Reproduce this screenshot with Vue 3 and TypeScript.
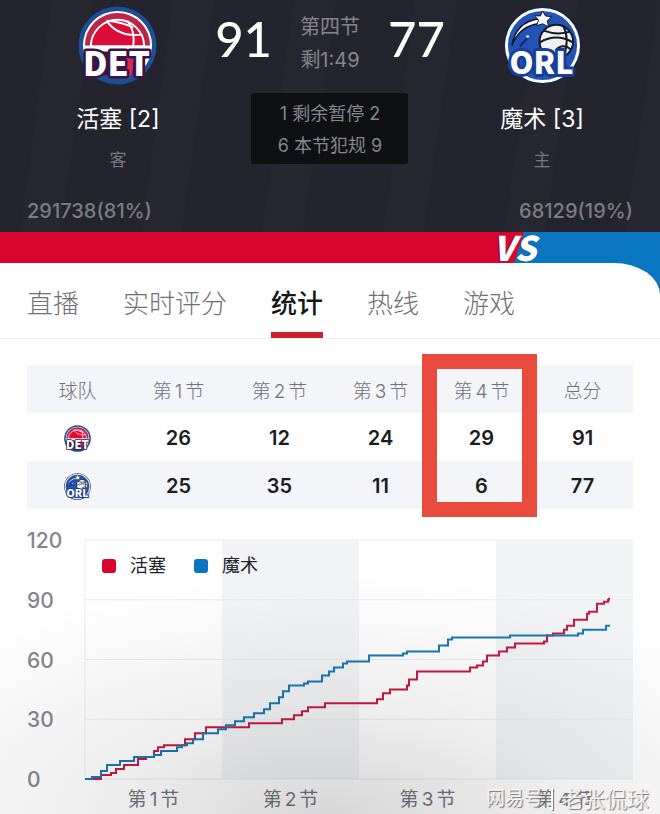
<script setup lang="ts">
interface Team {
  key: string
  code: string
  name: string
  rank: number
  side: string
  votes: string
  quarters: number[]
  total: number
}

type Point = [x: number, score: number]

const teams: Team[] = [
  { key: 'det', code: 'DET', name: '活塞', rank: 2, side: '客', votes: '291738(81%)', quarters: [26, 12, 24, 29], total: 91 },
  { key: 'orl', code: 'ORL', name: '魔术', rank: 3, side: '主', votes: '68129(19%)', quarters: [25, 35, 11, 6], total: 77 },
]
const [away, home] = teams

const tabs = ['直播', '实时评分', '统计', '热线', '游戏']
const activeTab = '统计'
const quarters = [1, 2, 3, 4]
const ticks = [120, 90, 60, 30, 0]

const awayRun: Point[] = [
  [0, 0], [16, 2], [26, 3], [31, 5], [39, 7], [53, 10], [61, 11], [69, 14], [73, 16], [79, 17],
  [100, 20], [110, 23], [121, 26], [164, 28], [197, 30], [209, 32], [217, 34], [223, 36], [240, 38],
  [292, 40], [298, 43], [305, 45], [322, 47], [324, 50], [332, 54], [385, 56], [392, 57], [398, 59],
  [402, 62], [414, 64], [422, 66], [430, 68], [459, 69], [462, 72], [468, 73], [479, 75], [482, 77],
  [489, 80], [502, 83], [504, 84], [512, 88], [519, 89], [523, 90], [524, 91],
]
const homeRun: Point[] = [
  [0, 0], [7, 1], [16, 4], [22, 7], [35, 9], [49, 11], [69, 12], [76, 14], [92, 16], [97, 17],
  [102, 18], [108, 20], [118, 23], [133, 25], [141, 27], [150, 29], [159, 31], [169, 33], [179, 35],
  [185, 38], [194, 41], [198, 44], [204, 47], [219, 48], [223, 49], [237, 52], [244, 54], [249, 56],
  [258, 58], [262, 59], [284, 62], [318, 63], [322, 64], [354, 67], [363, 70], [367, 71], [425, 72],
  [493, 73], [498, 75], [521, 77], [525, 77],
]

// Two vertical units per point scored, drawn as a staircase.
function stepPath(run: Point[]): string {
  return run
    .map(([x, score], i) => (i === 0 ? `M${x} ${240 - score * 2}` : `H${x}V${240 - score * 2}`))
    .join('')
}
const awayPath = stepPath(awayRun)
const homePath = stepPath(homeRun)
</script>

<template>
  <main class="page">
    <svg class="defs" aria-hidden="true">
      <symbol id="logo-det" viewBox="0 0 80 80">
        <circle cx="40" cy="40" r="39.5" fill="#1c4f94" />
        <circle cx="40" cy="40" r="35" fill="#fff" />
        <circle cx="40" cy="40" r="33" fill="#b9284a" />
        <path d="M13 41A27 27 0 0 1 67 41Z" fill="#dc0c38" stroke="#fff" stroke-width="2" />
        <path d="M29 15C36 25 46 31 64 29M50 15Q58 24 56 42M29 15Q44 16 56 22" fill="none" stroke="#fff" stroke-width="2" />
        <path d="M6 40H74L70 57Q61 74 40 74T10 57Z" fill="#fff" />
        <path d="M22 72Q40 82 60 70L56 69H26Z" fill="#1c4f94" />
        <path d="M10 46H68V70H10Z" fill="#3a1444" />
        <path d="M49 48L57 44L55 70L48 72Z" fill="#d42b54" />
      </symbol>
      <symbol id="logo-orl" viewBox="0 0 80 80">
        <circle cx="40" cy="40" r="39.5" fill="#15264d" />
        <circle cx="40" cy="40" r="38" fill="#fff" />
        <circle cx="40" cy="40" r="35" fill="#2253b5" />
        <circle cx="54" cy="36" r="17" fill="#f0f0f0" stroke="#111827" stroke-width="2" />
        <path d="M41 25Q55 30 68 26M37 37Q54 27 71 37M61 20Q68 34 61 52M53 45Q60 37 69 44" fill="none" stroke="#111827" stroke-width="2" />
        <path d="M9 40Q13 16 37 13L36 18Q17 20 9 40Z" fill="#fff" stroke="#111827" stroke-width="1.5" />
        <path d="M40 5L43 10L49 11L45 15L46 21L40 18L34 20L36 14L32 10L38 10Z" fill="#fff" stroke="#111827" />
        <path d="M17 41L25 32" stroke="#14296a" stroke-width="2" />
        <circle cx="25" cy="31" r="1.5" fill="#d8e7ff" />
      </symbol>
    </svg>

    <header class="scoreboard">
      <div class="match">
        <section class="team">
          <svg class="logo det" viewBox="0 0 80 80">
            <use href="#logo-det" />
            <text x="39" y="71">{{ away.code }}</text>
          </svg>
          <h2 class="team-name">{{ away.name }} [{{ away.rank }}]</h2>
          <p class="side">{{ away.side }}</p>
        </section>
        <section class="centre">
          <div class="score-row">
            <strong class="score">{{ away.total }}</strong>
            <div class="clock">
              <span>第四节</span>
              <span>剩1:49</span>
            </div>
            <strong class="score">{{ home.total }}</strong>
          </div>
          <div class="fouls">
            <span>1 剩余暂停 2</span>
            <span>6 本节犯规 9</span>
          </div>
        </section>
        <section class="team">
          <svg class="logo orl" viewBox="0 0 80 80">
            <use href="#logo-orl" />
            <text x="39" y="69">{{ home.code }}</text>
          </svg>
          <h2 class="team-name">{{ home.name }} [{{ home.rank }}]</h2>
          <p class="side">{{ home.side }}</p>
        </section>
      </div>
      <div class="votes">
        <span>{{ away.votes }}</span>
        <span>{{ home.votes }}</span>
      </div>
    </header>

    <div class="support">
      <div class="support-away"></div>
      <div class="support-vs">VS</div>
      <div class="support-home"></div>
    </div>

    <div class="panel-back">
      <div class="panel">
        <nav class="tabs">
          <button v-for="tab in tabs" :key="tab" type="button" class="tab" :class="{ active: tab === activeTab }">{{ tab }}</button>
        </nav>

        <div class="content">
          <div class="table-wrap">
            <table class="quarters">
              <thead>
                <tr>
                  <th scope="col">球队</th>
                  <th v-for="q in quarters" :key="q" scope="col">第<span class="num">{{ q }}</span>节</th>
                  <th scope="col">总分</th>
                </tr>
              </thead>
              <tbody>
                <tr v-for="team in teams" :key="team.key">
                  <td>
                    <svg class="mini-logo" :class="team.key" viewBox="0 0 80 80">
                      <use :href="`#logo-${team.key}`" />
                      <text x="40" y="71">{{ team.code }}</text>
                    </svg>
                  </td>
                  <td v-for="(points, i) in team.quarters" :key="i">{{ points }}</td>
                  <td>{{ team.total }}</td>
                </tr>
              </tbody>
            </table>
            <div class="highlight"></div>
          </div>

          <section class="chart">
            <div class="y-axis">
              <span v-for="tick in ticks" :key="tick">{{ tick }}</span>
            </div>
            <div class="plot">
              <svg class="lines" viewBox="0 0 548 240" preserveAspectRatio="none" aria-hidden="true">
                <rect x="137" width="137" height="240" fill="#f3f4f6" />
                <rect x="411" width="137" height="240" fill="#f3f4f6" />
                <path class="grid-line" d="M0 0H548M0 60H548M0 120H548M0 180H548M0 240H548M0 0V240" />
                <path class="run away" :d="awayPath" />
                <path class="run home" :d="homePath" />
              </svg>
              <div class="legend">
                <span class="key"><i class="swatch away"></i>{{ away.name }}</span>
                <span class="key"><i class="swatch home"></i>{{ home.name }}</span>
              </div>
            </div>
            <div class="x-axis">
              <span v-for="q in quarters" :key="q">第<span class="num">{{ q }}</span>节</span>
            </div>
          </section>
        </div>
      </div>
    </div>

    <div class="watermark"><span class="brand">网易号</span><i class="bar"></i><span>老张侃球</span></div>
  </main>
</template>

<style>
body {
  background: #fff;
}
</style>

<style scoped>
.page {
  position: relative;
  display: flex;
  flex-direction: column;
  min-height: 100vh;
  overflow: hidden;
  font-family: Inter, "Noto Sans CJK SC", sans-serif;
}
.defs {
  position: absolute;
  width: 0;
  height: 0;
}
.scoreboard {
  box-sizing: border-box;
  padding: 6px 27px 9px;
  color: #85858f;
  background:
    repeating-linear-gradient(98deg, transparent 0 50px, rgba(62, 62, 82, 0.1) 54px 90px, transparent 94px 120px),
    #24242e;
}
.match {
  display: grid;
  grid-template-columns: 3fr 4fr 3fr;
}
.team {
  display: flex;
  flex-direction: column;
  align-items: center;
}
.logo {
  width: 79px;
  height: 79px;
  overflow: visible;
}
.logo text,
.mini-logo text {
  fill: #fff;
  font-family: "Noto Sans CJK SC", sans-serif;
  font-weight: 900;
  text-anchor: middle;
  paint-order: stroke;
  stroke-linejoin: round;
}
.det text {
  font-size: 34px;
  stroke: #3a1444;
  stroke-width: 5px;
}
.orl text {
  font-size: 31px;
  stroke: #173e96;
  stroke-width: 6px;
}
.team-name {
  margin: 18px 0 0;
  font-size: 23px;
  line-height: 32px;
  font-weight: 400;
  color: #fff;
}
.side {
  margin: 13px 0 0;
  font-size: 17px;
  line-height: 24px;
  color: #777781;
}
.centre {
  display: flex;
  flex-direction: column;
  align-items: center;
}
.score-row {
  display: flex;
  justify-content: center;
  gap: 28px;
}
.score {
  font-family: Lato, sans-serif;
  font-size: 49px;
  line-height: 64px;
  font-weight: 500;
  color: #fff;
}
.clock {
  display: flex;
  flex-direction: column;
  align-items: center;
  padding-top: 5px;
  font-size: 20px;
  line-height: 33px;
  white-space: nowrap;
}
.fouls {
  display: flex;
  flex-direction: column;
  align-items: center;
  box-sizing: border-box;
  width: 157px;
  margin-top: 16px;
  padding: 5px 0 2px;
  border-radius: 3px;
  font-size: 18px;
  line-height: 32px;
  white-space: nowrap;
  background: #0e1013;
}
.votes {
  display: flex;
  justify-content: space-between;
  margin-top: 27px;
  font-size: 20px;
  line-height: 24px;
  font-weight: 500;
  color: #7c7c86;
}
.support {
  display: flex;
  height: 31px;
}
.support-away {
  flex: 496;
  background: #d9052f;
}
.support-vs {
  position: relative;
  z-index: 1;
  width: 36px;
  background: linear-gradient(108deg, #d9052f 60%, #0876c0 62%);
  color: #fff;
  font-family: "Noto Sans CJK SC", sans-serif;
  font-size: 34px;
  line-height: 30px;
  font-weight: 900;
  font-style: italic;
  text-indent: -3px;
  text-shadow: -1px 0 1px rgba(30, 20, 60, 0.5);
}
.support-home {
  flex: 128;
  background: #0876c0;
}
.panel-back {
  display: flex;
  flex: 1;
  background: #0876c0;
}
.panel {
  flex: 1;
  min-width: 0;
  border-radius: 0 46px 0 0 / 0 32px 0 0;
  background: #fff;
}
.tabs {
  display: flex;
  gap: 44px;
  height: 75px;
  padding: 0 27px;
  border-bottom: 1px solid #eeeff1;
}
.tab {
  box-sizing: border-box;
  height: 75px;
  padding: 7px 0 0;
  border: 0;
  border-bottom: 6px solid transparent;
  background: none;
  font-family: inherit;
  font-size: 26px;
  font-weight: 300;
  color: #6f7076;
}
.tab.active {
  border-bottom-color: #ca202b;
  font-weight: 500;
  color: #16171b;
}
.content {
  padding: 26px 27px 0;
}
.table-wrap {
  position: relative;
}
.quarters {
  width: 100%;
  table-layout: fixed;
  border-collapse: collapse;
  text-align: center;
}
.quarters tr {
  height: 48px;
}
.quarters th,
.quarters td {
  padding: 2px 0 0;
}
.quarters th {
  padding-top: 5px;
  background: #f3f5f8;
  font-size: 19px;
  line-height: 28px;
  font-weight: 300;
  color: #70717e;
}
.quarters td {
  font-size: 20px;
  font-weight: 600;
  color: #1c1d22;
}
.quarters tbody tr:nth-child(2) td {
  background: #f3f5f8;
}
.num {
  margin: 0 3px;
}
.mini-logo {
  display: block;
  width: 27px;
  height: 27px;
  margin: 0 auto;
  overflow: visible;
}
.highlight {
  position: absolute;
  top: -11px;
  bottom: -8px;
  left: calc(100% * 4 / 6 - 9px);
  box-sizing: border-box;
  width: calc(100% / 6 + 14px);
  border: 15px solid #e94b3c;
}
.chart {
  display: grid;
  grid-template-columns: 58px 1fr;
  margin-top: 31px;
}
.y-axis {
  display: flex;
  flex-direction: column;
  justify-content: space-between;
  margin: -9px 0 -11px;
  font-size: 21px;
  line-height: 20px;
  font-weight: 500;
  color: #85868d;
}
.plot {
  position: relative;
  height: 239px;
}
.lines {
  display: block;
  width: 100%;
  height: 100%;
  overflow: visible;
}
.lines path {
  fill: none;
  vector-effect: non-scaling-stroke;
}
.grid-line {
  stroke: #e9ebee;
  stroke-width: 1;
}
.run {
  stroke-width: 2;
}
.run.away {
  stroke: #c9173f;
}
.run.home {
  stroke: #1878b2;
}
.legend {
  position: absolute;
  top: 12px;
  left: 17px;
  display: flex;
  gap: 28px;
  font-size: 18px;
  line-height: 28px;
  color: #222328;
}
.key {
  display: flex;
  align-items: center;
  gap: 14px;
}
.swatch {
  width: 14px;
  height: 14px;
  border-radius: 3px;
}
.swatch.away {
  background: #d9052f;
}
.swatch.home {
  background: #0876c0;
}
.x-axis {
  display: grid;
  grid-column: 2;
  grid-template-columns: repeat(4, 1fr);
  padding-top: 7px;
  font-size: 19px;
  line-height: 28px;
  text-align: center;
  color: #74747f;
}
/* Soft shade rising from the bottom edge, above the chart. */
.page::after {
  content: "";
  position: absolute;
  right: 0;
  bottom: 0;
  left: 0;
  height: 240px;
  background: radial-gradient(ellipse 80% 100% at 50% 100%, rgba(20, 20, 20, 0.17), rgba(20, 20, 20, 0.07) 45%, transparent);
  pointer-events: none;
}
.watermark {
  position: absolute;
  right: 11px;
  bottom: 0;
  z-index: 1;
  display: flex;
  align-items: center;
  font-size: 22px;
  line-height: 30px;
  color: rgba(250, 250, 250, 0.9);
  text-shadow: 1px 1px 1px #77777e;
}
.brand {
  font-size: 19px;
  font-weight: 500;
}
.bar {
  width: 2px;
  height: 22px;
  margin: 0 8px;
  background: #fff;
  box-shadow: 1px 1px 1px #77777e;
}
</style>
